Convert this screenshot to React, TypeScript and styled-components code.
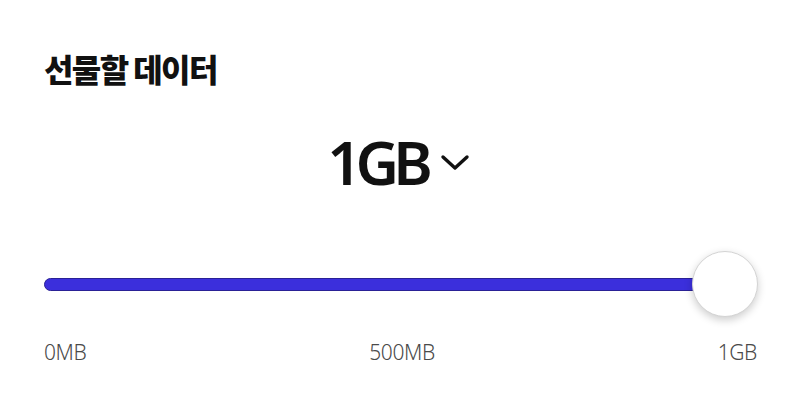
import React from 'react';
import styled, { createGlobalStyle } from 'styled-components';

const GlobalStyle = createGlobalStyle`
  html, body {
    margin: 0;
    padding: 0;
    background: #ffffff;
  }
  body {
    font-family: "Noto Sans", "Noto Sans CJK KR", sans-serif;
  }
`;

const Page = styled.div`
  width: 800px;
  height: 407px;
  box-sizing: border-box;
  padding: 45px 43px 0 44px;
  background: #ffffff;
`;

const Title = styled.h2`
  margin: 0;
  font-family: "Noto Sans CJK KR", sans-serif;
  font-size: 32px;
  font-weight: 900;
  letter-spacing: -1.6px;
  line-height: 46px;
  color: #111111;
`;

const AmountRow = styled.div`
  display: flex;
  justify-content: center;
  align-items: center;
  gap: 13px;
  margin-top: 31px;
  padding-right: 4px;
`;

const Amount = styled.span`
  font-family: "Noto Sans", sans-serif;
  font-size: 60px;
  font-weight: 600;
  letter-spacing: -6px;
  line-height: 80px;
  color: #111111;
`;

const SliderWrap = styled.div`
  position: relative;
  height: 66px;
  margin-top: 49px;
  display: flex;
  align-items: center;
`;

const Track = styled.div`
  flex: 1;
  height: 13px;
  box-sizing: border-box;
  border-radius: 7px;
  background: #3b2fdc;
  border: 1px solid #2a2196;
  margin-right: 30px;
`;

const Thumb = styled.div`
  position: absolute;
  right: -1px;
  top: 0;
  width: 66px;
  height: 66px;
  box-sizing: border-box;
  border-radius: 50%;
  background: #ffffff;
  border: 1px solid #d4d4d4;
  box-shadow: 0 3px 8px rgba(0, 0, 0, 0.2);
`;

const Labels = styled.div`
  display: flex;
  justify-content: space-between;
  margin-top: 21px;
`;

const Label = styled.span`
  font-family: "Noto Sans", sans-serif;
  font-size: 21px;
  font-weight: 300;
  color: #4a4a4a;
  letter-spacing: -0.4px;
  line-height: 28px;
`;

const Chevron = () => (
  <svg width="30" height="20" viewBox="0 0 30 20" fill="none">
    <path d="M3 5 L15 16 L27 5" stroke="#111" strokeWidth="3.4" strokeLinecap="round" strokeLinejoin="round" />
  </svg>
);

export default function App() {
  return (
    <>
      <GlobalStyle />
      <Page>
        <Title>선물할 데이터</Title>
        <AmountRow>
          <Amount>1GB</Amount>
          <Chevron />
        </AmountRow>
        <SliderWrap>
          <Track />
          <Thumb />
        </SliderWrap>
        <Labels>
          <Label>0MB</Label>
          <Label>500MB</Label>
          <Label>1GB</Label>
        </Labels>
      </Page>
    </>
  );
}
